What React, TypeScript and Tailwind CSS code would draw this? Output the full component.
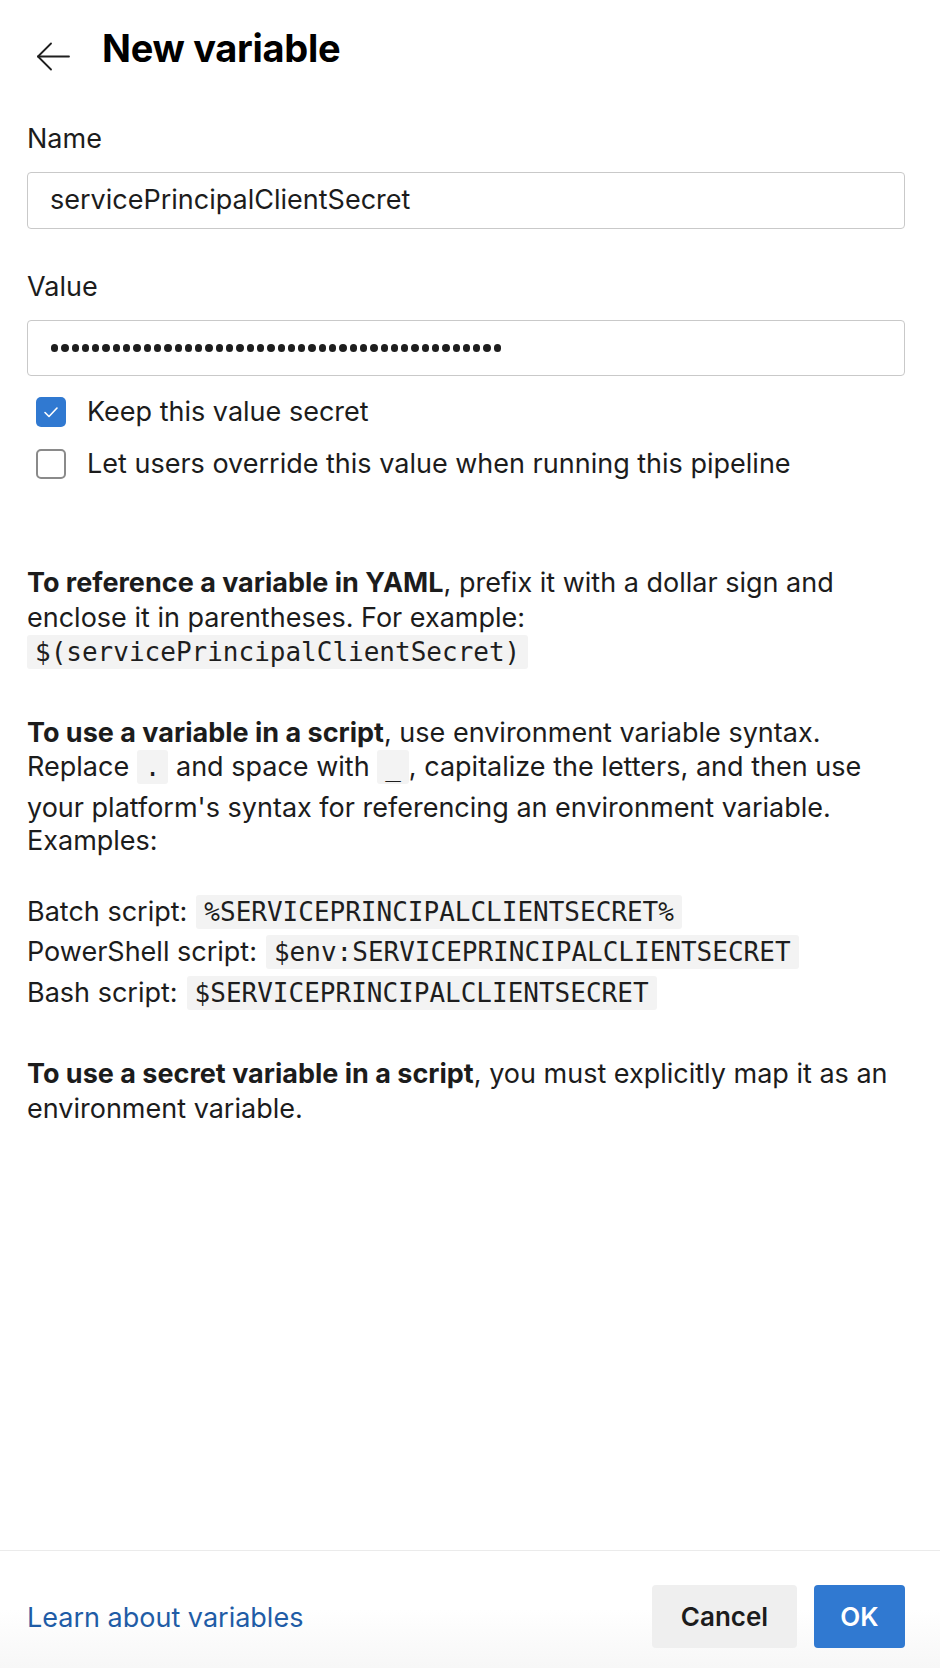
import React from "react";

const Code = ({ children }: { children: React.ReactNode }) => (
  <code
    className="inline-block rounded-[3px] bg-[#f3f3f3] px-[8px] align-middle text-[26px] leading-[34px] text-[#1e1e1e]"
    style={{ fontFamily: '"DejaVu Sans Mono", "Liberation Mono", monospace' }}
  >
    {children}
  </code>
);

const Dots = ({ n }: { n: number }) => (
  <div className="flex items-center gap-[3px]">
    {Array.from({ length: n }).map((_, i) => (
      <span key={i} className="block h-[7.3px] w-[7.3px] rounded-full bg-[#1e1e1e]" />
    ))}
  </div>
);

export default function App() {
  return (
    <div
      className="flex h-[1668px] w-[940px] flex-col bg-white text-[#1c1c1c]"
      style={{ fontFamily: 'Inter, "Liberation Sans", sans-serif' }}
    >
      <div className="flex-1">
        {/* Header */}
        <div className="flex items-start pl-[37px] pt-[24px]">
          <svg
            className="mt-[18px] shrink-0"
            width="33"
            height="29"
            viewBox="0 0 33 29"
            fill="none"
            stroke="#1f1f1f"
            strokeWidth="1.8"
            strokeLinecap="round"
            strokeLinejoin="round"
          >
            <path d="M1 14.5 H32" />
            <path d="M14 1.5 L1 14.5 L14 27.5" />
          </svg>
          <h1 className="ml-[32px] text-[38px] font-bold leading-[48px] tracking-[-0.3px] text-black">
            New variable
          </h1>
        </div>

        <div className="pl-[27px] pr-[35px] text-[27px]">
          <div className="mt-[50px] leading-[34px]">Name</div>
          <div className="mt-[16px] flex h-[57px] items-center rounded-[4px] border-[1.5px] border-[#c9c9c9] px-[22px]">
            servicePrincipalClientSecret
          </div>

          <div className="mt-[41px] leading-[34px]">Value</div>
          <div className="mt-[16px] flex h-[56px] items-center rounded-[4px] border-[1.5px] border-[#c9c9c9] px-[23px]">
            <Dots n={44} />
          </div>

          <div className="mt-[19px] flex h-[34px] items-center">
            <span className="ml-[9px] flex h-[30px] w-[30px] items-center justify-center rounded-[5px] bg-[#3079d1]">
              <svg width="20" height="20" viewBox="0 0 20 20" fill="none" stroke="white" strokeWidth="1.6" strokeLinecap="round" strokeLinejoin="round">
                <path d="M4 10.5 L8 14.5 L16 6" />
              </svg>
            </span>
            <span className="ml-[21px] leading-[34px]">Keep this value secret</span>
          </div>
          <div className="mt-[18px] flex h-[34px] items-center">
            <span className="ml-[9px] h-[30px] w-[30px] rounded-[5px] border-2 border-[#8a8a8a] bg-white" />
            <span className="ml-[21px] leading-[34px]">
              Let users override this value when running this pipeline
            </span>
          </div>

          {/* Paragraph 1 */}
          <div className="mt-[85px] leading-[34.5px]">
            <div>
              <b className="font-bold">To reference a variable in YAML</b>, prefix it with a dollar sign and
            </div>
            <div>enclose it in parentheses. For example:</div>
            <div className="flex h-[34.5px] items-center">
              <Code>$(servicePrincipalClientSecret)</Code>
            </div>
          </div>

          {/* Paragraph 2 */}
          <div className="mt-[46px] leading-[34.5px]">
            <div>
              <b className="font-bold">To use a variable in a script</b>, use environment variable syntax.
            </div>
            <div className="flex h-[34.5px] items-center whitespace-pre">
              <span>Replace </span>
              <Code>.</Code>
              <span> and space with </span>
              <Code>_</Code>
              <span>, capitalize the letters, and then use</span>
            </div>
            <div className="mt-[6px]">your platform's syntax for referencing an environment variable.</div>
            <div className="-mt-[1px]">Examples:</div>
          </div>

          <div className="mt-[33px] flex flex-col">
            <div className="flex h-[40.5px] items-center">
              <span>Batch script:</span>
              <span className="ml-[9px] flex">
                <Code>%SERVICEPRINCIPALCLIENTSECRET%</Code>
              </span>
            </div>
            <div className="flex h-[40.5px] items-center">
              <span>PowerShell script:</span>
              <span className="ml-[9px] flex">
                <Code>$env:SERVICEPRINCIPALCLIENTSECRET</Code>
              </span>
            </div>
            <div className="flex h-[40.5px] items-center">
              <span>Bash script:</span>
              <span className="ml-[9px] flex">
                <Code>$SERVICEPRINCIPALCLIENTSECRET</Code>
              </span>
            </div>
          </div>

          <div className="mt-[44px] leading-[34.5px]">
            <div>
              <b className="font-bold">To use a secret variable in a script</b>, you must explicitly map it as an
            </div>
            <div>environment variable.</div>
          </div>
        </div>
      </div>

      {/* Footer */}
      <div className="flex h-[118px] items-start justify-between border-t border-[#ebebeb] bg-gradient-to-b from-white from-50% to-[#f7f7f7] pl-[27px] pr-[35px] pt-[34px]">
        <a className="mt-[16px] text-[27px] leading-[34px] text-[#1f5ca6]" href="#">
          Learn about variables
        </a>
        <div className="flex gap-[17px]">
          <button className="h-[63px] w-[145px] rounded-[4px] bg-[#efefef] text-[26px] font-semibold text-[#1c1c1c]">
            Cancel
          </button>
          <button className="h-[63px] w-[91px] rounded-[4px] bg-[#3079d1] text-[26px] font-semibold text-white">
            OK
          </button>
        </div>
      </div>
    </div>
  );
}
